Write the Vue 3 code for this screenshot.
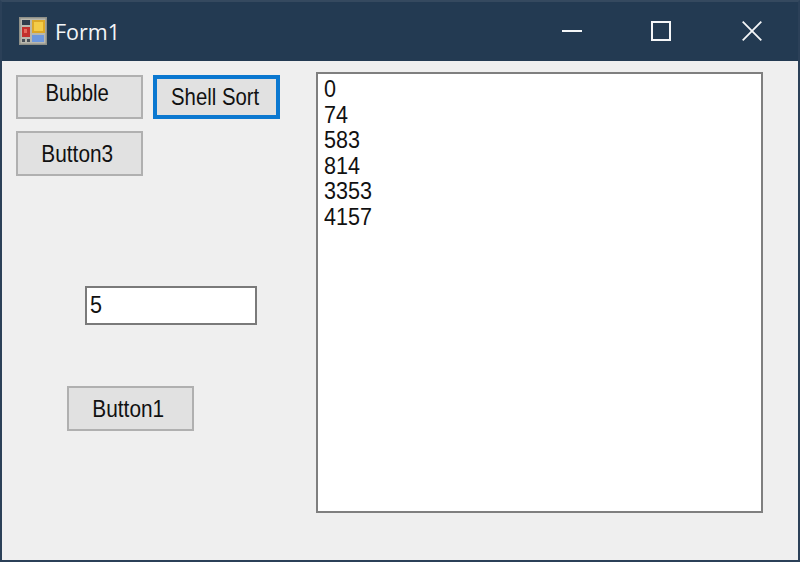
<script setup>
const numbers = [0, 74, 583, 814, 3353, 4157]
</script>

<template>
  <div class="window">
    <header class="titlebar">
      <svg class="app-icon" width="28" height="28" viewBox="0 0 28 28">
        <rect x="0" y="0" width="28" height="28" fill="#8f9088" />
        <rect x="1.5" y="1.5" width="25" height="25" fill="#b9b8ae" />
        <rect x="3" y="3" width="8" height="5" fill="#2f3d4c" />
        <rect x="3" y="10" width="8" height="10" fill="#c2302c" />
        <rect x="5" y="12" width="3" height="4" fill="#e8685c" />
        <rect x="13" y="3" width="13" height="13" fill="#dca828" />
        <rect x="15" y="5" width="9" height="9" fill="#f4cc48" />
        <rect x="13" y="18" width="12" height="7" fill="#6e98de" />
        <rect x="3" y="22" width="3" height="3" fill="#4a5058" />
        <rect x="8" y="22" width="3" height="3" fill="#4a5058" />
      </svg>
      <span class="title">Form1</span>
      <div class="controls">
        <span class="ctl">
          <svg width="20" height="20" viewBox="0 0 20 20"><path d="M0 10H20" stroke="#f4f6f8" stroke-width="2" fill="none" /></svg>
        </span>
        <span class="ctl ctl-max">
          <svg width="20" height="20" viewBox="0 0 20 20"><rect x="1" y="1" width="18" height="18" stroke="#f4f6f8" stroke-width="2" fill="none" /></svg>
        </span>
        <span class="ctl">
          <svg width="20" height="20" viewBox="0 0 20 20"><path d="M0.7 0.7L19.3 19.3M19.3 0.7L0.7 19.3" stroke="#f4f6f8" stroke-width="1.8" fill="none" /></svg>
        </span>
      </div>
    </header>

    <main class="client">
      <section class="left">
        <div class="row">
          <button class="btn bubble" type="button"><span class="label">Bubble</span></button>
          <button class="btn focused" type="button"><span class="label">Shell Sort</span></button>
        </div>
        <div class="row row-second">
          <button class="btn" type="button"><span class="label wide">Button3</span></button>
        </div>
        <div class="textbox"><span class="digits">5</span></div>
        <button class="btn btn-one" type="button"><span class="label wide">Button1</span></button>
      </section>
      <section class="listbox">
        <div v-for="n in numbers" :key="n" class="item"><span class="digits">{{ n }}</span></div>
      </section>
    </main>
  </div>
</template>

<style>
html, body { margin: 0; padding: 0; background: #f0f0f0; }
</style>

<style scoped>
.window {
  box-sizing: border-box;
  width: 800px;
  height: 562px;
  border: 2px solid #2b4058;
  border-top-color: #35495f;
  background: #efefef;
  display: flex;
  flex-direction: column;
  overflow: hidden;
  font-family: "Liberation Sans", Arial, sans-serif;
  color: #111;
}
.titlebar {
  height: 59px;
  flex: none;
  background: #233a52;
  display: flex;
  align-items: center;
  padding-left: 17px;
  color: #f4f6f8;
}
.app-icon { flex: none; margin-top: -2px; margin-right: 8px; }
.title {
  font-family: "Open Sans", sans-serif;
  font-size: 21.5px;
  margin-top: -1px;
}
.controls {
  margin-left: auto;
  display: flex;
  margin-right: 36px;
  gap: 69px;
}
.ctl { display: flex; width: 20px; height: 20px; margin-top: -2px; }
.ctl-max { margin-right: 2px; }
.client {
  flex: 1;
  display: flex;
  align-items: flex-start;
  padding: 11px 0 0 14px;
}
.left {
  width: 300px;
  flex: none;
  display: flex;
  flex-direction: column;
  align-items: flex-start;
  padding-top: 3px;
}
.row { display: flex; gap: 10px; }
.row-second { margin-top: 12px; }
.btn {
  box-sizing: border-box;
  width: 127px;
  height: 44px;
  margin: 0;
  padding: 0 5px 0 0;
  border: 2px solid #b0b0b0;
  border-radius: 0;
  background: #e1e1e1;
  font-family: "Liberation Sans", Arial, sans-serif;
  font-size: 24.5px;
  color: #111;
}
.label {
  display: inline-block;
  transform: scaleX(0.83);
  line-height: 28px;
}
.label.wide { transform: scaleX(0.85); }
.bubble .label { position: relative; top: -4px; }
.row-second .btn { height: 45px; }
.focused { border: 4px solid #0b78d0; padding-right: 3px; }
.textbox {
  box-sizing: border-box;
  width: 172px;
  height: 39px;
  margin: 110px 0 0 69px;
  padding: 0 0 0 3px;
  border: 2px solid #7a7a7a;
  background: #fff;
  font-size: 24.5px;
  line-height: 33px;
}
.btn-one { height: 45px; margin: 61px 0 0 51px; }
.listbox {
  box-sizing: border-box;
  width: 447px;
  height: 441px;
  padding: 2px 0 0 6px;
  border: 2px solid #7f7f7f;
  background: #fff;
}
.item { font-size: 24.5px; line-height: 25.5px; height: 25.5px; }
.digits {
  display: inline-block;
  transform: scaleX(0.88);
  transform-origin: left center;
}
</style>
